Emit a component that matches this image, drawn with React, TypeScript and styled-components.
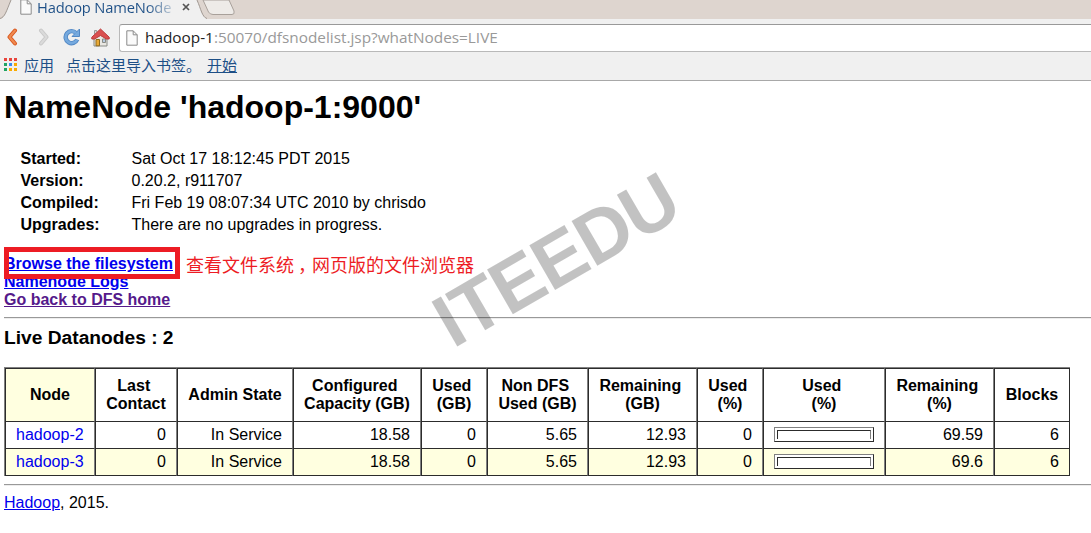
import React from 'react';
import styled, { createGlobalStyle } from 'styled-components';

const Global = createGlobalStyle`
  html, body { margin: 0; background: #fff; overflow: hidden; }
  body { font: 16px/18px "Liberation Sans", Arial, sans-serif; color: #000; }
`;

const Window = styled.div`
  position: relative;
  width: 1091px;
  height: 533px;
  overflow: hidden;
`;
const TabStrip = styled.div`
  height: 19px;
  background: #ded5cf;
  position: relative;
`;
const TabShape = styled.svg`
  position: absolute;
  left: 0;
  top: 0;
`;
const Tab = styled.div`
  position: relative;
  display: flex;
  align-items: center;
  height: 14px;
  padding-left: 20px;
`;
const TabTitle = styled.span`
  margin-left: 5px;
  width: 137px;
  white-space: nowrap;
  font: 14.7px/18px "Open Sans", "Noto Sans", sans-serif;
  letter-spacing: -0.16px;
  color: transparent;
  background: linear-gradient(90deg, #1d4f86 80%, #c9d3dc 100%);
  background-clip: text;
`;
const CloseIcon = styled.svg`
  margin-left: 8px;
`;
const Toolbar = styled.div`
  display: flex;
  align-items: center;
  height: 36px;
  background: #f0f0f0;
  padding-left: 3px;
`;
const NavIcon = styled.svg<{ $gap: number }>`
  flex: none;
  margin-right: ${(p) => p.$gap}px;
`;
const Omnibox = styled.div`
  flex: 1;
  display: flex;
  align-items: center;
  box-sizing: border-box;
  height: 28px;
  padding-left: 6px;
  background: #fff;
  border: 1px solid #b9b9b9;
  border-top-color: #999;
  border-right: 0;
  border-radius: 3px 0 0 3px;
  margin-top: 1px;
`;
const Url = styled.span`
  margin-left: 7px;
  padding-bottom: 2px;
  font: 15.35px/20px "Open Sans", "Noto Sans", sans-serif;
  color: #999;
  white-space: nowrap;
`;
const Host = styled.span`
  color: #222;
`;
const Bookmarks = styled.div`
  display: flex;
  align-items: center;
  box-sizing: border-box;
  height: 26px;
  padding: 0 0 5px 4px;
  background: #f0f0f0;
  border-bottom: 1px solid #a8a8a8;
  font: 15px/20px "Noto Sans CJK SC", sans-serif;
  color: #1d4f86;
`;
const Bookmark = styled.span<{ $left: number; $underline?: boolean }>`
  margin-left: ${(p) => p.$left}px;
  white-space: nowrap;
  text-decoration: ${(p) => (p.$underline ? 'underline' : 'none')};
`;

const Page = styled.main`
  padding: 0 0 0 4px;
`;
const Title = styled.h1`
  margin: 0;
  padding-top: 8px;
  font-size: 32px;
  line-height: 36px;
  height: 58px;
`;
const Info = styled.dl`
  display: grid;
  grid-template-columns: 111px auto;
  grid-auto-rows: 22px;
  align-content: start;
  line-height: 22px;
  margin: 0;
  padding: 1px 0 0 16.5px;
  height: 107px;
`;
const Term = styled.dt`
  font-weight: bold;
`;
const Value = styled.dd`
  margin: 0;
`;
const Links = styled.nav`
  display: flex;
  flex-direction: column;
  align-items: flex-start;
  height: 62px;
  box-sizing: border-box;
`;
const PageLink = styled.a<{ $visited?: boolean }>`
  font-weight: bold;
  color: ${(p) => (p.$visited ? '#551a8b' : '#0000ee')};
  text-decoration: underline;
`;
const Rule = styled.hr<{ $gap?: number }>`
  margin: ${(p) => p.$gap ?? 0}px 0 0;
  height: 2px;
  border: 0;
  box-sizing: border-box;
  border-top: 1px solid #999;
  border-bottom: 1px solid #ededed;
`;
const Subtitle = styled.h3`
  margin: 0;
  padding-top: 8px;
  height: 40px;
  font-size: 19.2px;
  line-height: 22px;
`;
const NodeTable = styled.table`
  table-layout: fixed;
  width: 1066px;
  border-collapse: separate;
  border-spacing: 0;
  border-top: 1px solid #808080;
  border-left: 1px solid #808080;
`;
const HeadCell = styled.th<{ $sorted?: boolean }>`
  box-sizing: border-box;
  height: 54px;
  padding: 0 9.5px;
  border: 1px solid #2c2c2c;
  border-right-color: #808080;
  background: ${(p) => (p.$sorted ? '#ffffe0' : '#fff')};
  text-align: center;
  white-space: pre;
  &:last-child { border-right-color: #2c2c2c; }
`;
const Row = styled.tr<{ $alt: boolean }>`
  background: ${(p) => (p.$alt ? '#ffffe0' : '#fff')};
`;
const Cell = styled.td<{ $align?: string }>`
  box-sizing: border-box;
  height: 27px;
  padding: 0 10px;
  border: 1px solid #2c2c2c;
  border-top: 0;
  border-right-color: #808080;
  text-align: ${(p) => p.$align ?? 'right'};
  &:last-child { border-right-color: #2c2c2c; }
`;
const NodeLink = styled.a`
  color: #0000ee;
`;
const Meter = styled.div`
  box-sizing: border-box;
  width: 100px;
  height: 15px;
  margin-bottom: 2px;
  padding: 2px;
  background: #fff;
  border: 1px solid;
  border-color: #808080 #2c2c2c #2c2c2c #808080;
`;
const MeterTrack = styled.div`
  box-sizing: border-box;
  height: 9px;
  border: 1px solid;
  border-color: #2c2c2c #808080 #fff #2c2c2c;
  border-bottom: 0;
`;
const Footer = styled.footer`
  padding-top: 8px;
`;
const FooterLink = styled.a`
  color: #0000ee;
  text-decoration: underline;
`;

const Highlight = styled.div`
  position: absolute;
  left: 4px;
  top: 247px;
  width: 176px;
  height: 32px;
  box-sizing: border-box;
  border: 5px solid #ed1c24;
`;
const Note = styled.div`
  position: absolute;
  left: 186px;
  top: 252px;
  font: 18px/24px "Noto Sans CJK SC", sans-serif;
  color: #ed1c24;
  white-space: nowrap;
`;
const Comma = styled.span`
  display: inline-block;
  width: 18px;
  text-indent: 4px;
`;
const Watermark = styled.div`
  position: absolute;
  left: 556px;
  top: 259.5px;
  transform: translate(-50%, -50%) rotate(-30deg);
  font: bold 75px/79px "Liberation Sans", Arial, sans-serif;
  letter-spacing: -1.3px;
  color: rgba(0, 0, 0, 0.24);
  white-space: nowrap;
`;

const PageIcon = () => (
  <svg width="12" height="16" viewBox="0 0 12 16">
    <path d="M.8.8h6.4l4 4v10.4H.8z" fill="#fafafa" stroke="#8b8b8b" />
    <path d="M7.2.8v4h4" fill="none" stroke="#8b8b8b" />
  </svg>
);

const APP_COLORS = ['#e8453c', '#e8453c', '#e8453c', '#1fa463', '#3b8cf0', '#f9ab00', '#1fa463', '#f9ab00', '#f9ab00'];
const AppsIcon = () => (
  <svg width="14" height="14">
    {APP_COLORS.map((c, i) => (
      <rect key={i} x={(i % 3) * 5} y={Math.floor(i / 3) * 5} width="3" height="3" fill={c} />
    ))}
  </svg>
);

const INFO = [
  ['Started:', 'Sat Oct 17 18:12:45 PDT 2015'],
  ['Version:', '0.20.2, r911707'],
  ['Compiled:', 'Fri Feb 19 08:07:34 UTC 2010 by chrisdo'],
  ['Upgrades:', 'There are no upgrades in progress.'],
];
const COLUMNS: [string, number][] = [
  ['Node', 90],
  ['Last \nContact', 82],
  ['Admin State', 116],
  ['Configured \nCapacity (GB)', 128],
  ['Used \n(GB)', 66],
  ['Non DFS \nUsed (GB)', 101],
  ['Remaining \n(GB)', 109],
  ['Used \n(%)', 66],
  ['Used \n(%)', 122],
  ['Remaining \n(%)', 109],
  ['Blocks', 76],
];
const NODES = [
  ['hadoop-2', '0', 'In Service', '18.58', '0', '5.65', '12.93', '0', '69.59', '6'],
  ['hadoop-3', '0', 'In Service', '18.58', '0', '5.65', '12.93', '0', '69.6', '6'],
];

export default function App() {
  return (
    <Window>
      <Global />
      <TabStrip>
        <TabShape width="260" height="19">
          <path d="M0 19C5 18 6 12 11 0H197C201 9 202 17 207 19Z" fill="#f0f0f0" />
          <path d="M0 18.500C5 17 6 12 11 0M197 0C201 9 202 17 207 18.500" fill="none" stroke="#a09892" />
          <path d="M203 0L208.500 12Q210 14.500 213 14.500H232Q235 14.500 234 11L229 0Z" fill="#eeebe8" stroke="#a8a09a" />
        </TabShape>
        <Tab>
          <PageIcon />
          <TabTitle>Hadoop NameNode</TabTitle>
          <CloseIcon width="8" height="8">
            <path d="M1 1L7 7M7 1L1 7" stroke="#555" strokeWidth="1.7" />
          </CloseIcon>
        </Tab>
      </TabStrip>
      <Toolbar>
        <NavIcon $gap={18} width="16" height="18" viewBox="0 0 16 18">
          <path d="M12 2.500L6.500 9L12 15.500" fill="none" stroke="#d9581f" strokeWidth="4" strokeLinejoin="round" strokeLinecap="round" />
          <path d="M12 2.500L6.500 9L12 15.500" fill="none" stroke="#f08a50" strokeWidth="2" strokeLinejoin="round" strokeLinecap="round" />
        </NavIcon>
        <NavIcon $gap={10} width="16" height="18" viewBox="0 0 16 18">
          <path d="M4 2.500L9.500 9L4 15.500" fill="none" stroke="#c9c9c9" strokeWidth="4" strokeLinejoin="round" strokeLinecap="round" />
          <path d="M4 2.500L9.500 9L4 15.500" fill="none" stroke="#dadada" strokeWidth="2" strokeLinejoin="round" strokeLinecap="round" />
        </NavIcon>
        <NavIcon $gap={10} width="18" height="18" viewBox="0 0 18 18">
          <path d="M13 5A6 6 0 1 0 14.200 11.500" fill="none" stroke="#5288c4" strokeWidth="4.400" />
          <path d="M16.500 1v7.500H9z" fill="#75a9de" stroke="#5288c4" strokeLinejoin="round" />
          <path d="M13 5A6 6 0 1 0 14 11.700" fill="none" stroke="#75a9de" strokeWidth="2.600" />
        </NavIcon>
        <NavIcon $gap={9} width="19" height="19" viewBox="0 0 19 19">
          <path d="M3 8.500v9.500h13V8.500L9.500 4z" fill="#e9e7e2" stroke="#888a85" />
          <path d="M5 11.500h3.500v6.300H5z" fill="#e9a935" stroke="#8f6a1c" />
          <path d="M11.500 11h3v3.500h-3z" fill="#b8cbe0" stroke="#888a85" />
          <path d="M3.500 6V2.500h2.200V4" fill="#d8d5d0" stroke="#999" />
          <path d="M9.500 1L.8 9.200V11h2.700L9.500 7.500L15.500 11h2.700V9.200z" fill="#d94f4f" stroke="#bb3a3a" strokeLinejoin="round" />
        </NavIcon>
        <Omnibox>
          <PageIcon />
          <Url><Host>hadoop-1</Host>:50070/dfsnodelist.jsp?whatNodes=LIVE</Url>
        </Omnibox>
      </Toolbar>
      <Bookmarks>
        <AppsIcon />
        <Bookmark $left={6}>应用</Bookmark>
        <Bookmark $left={12}>点击这里导入书签。</Bookmark>
        <Bookmark $left={6} $underline>开始</Bookmark>
      </Bookmarks>
      <Page>
        <Title>NameNode 'hadoop-1:9000'</Title>
        <Info>
          {INFO.map(([k, v]) => (
            <React.Fragment key={k}>
              <Term>{k}</Term>
              <Value>{v}</Value>
            </React.Fragment>
          ))}
        </Info>
        <Links>
          <PageLink>Browse the filesystem</PageLink>
          <PageLink>Namenode Logs</PageLink>
          <PageLink $visited>Go back to DFS home</PageLink>
        </Links>
        <Rule />
        <Subtitle>Live Datanodes : 2</Subtitle>
        <NodeTable>
          <colgroup>
            {COLUMNS.map(([, w], i) => <col key={i} width={w} />)}
          </colgroup>
          <thead>
            <tr>
              {COLUMNS.map(([label], i) => <HeadCell key={i} $sorted={i === 0}>{label}</HeadCell>)}
            </tr>
          </thead>
          <tbody>
            {NODES.map(([name, ...values], r) => (
              <Row key={name} $alt={r === 1}>
                <Cell $align="left"><NodeLink>{name}</NodeLink></Cell>
                {values.slice(0, 7).map((v, i) => <Cell key={i}>{v}</Cell>)}
                <Cell><Meter><MeterTrack /></Meter></Cell>
                {values.slice(7).map((v, i) => <Cell key={i}>{v}</Cell>)}
              </Row>
            ))}
          </tbody>
        </NodeTable>
        <Rule $gap={8} />
        <Footer><FooterLink>Hadoop</FooterLink>, 2015.</Footer>
      </Page>
      <Highlight />
      <Note>查看文件系统<Comma>，</Comma>网页版的文件浏览器</Note>
      <Watermark>ITEEDU</Watermark>
    </Window>
  );
}
